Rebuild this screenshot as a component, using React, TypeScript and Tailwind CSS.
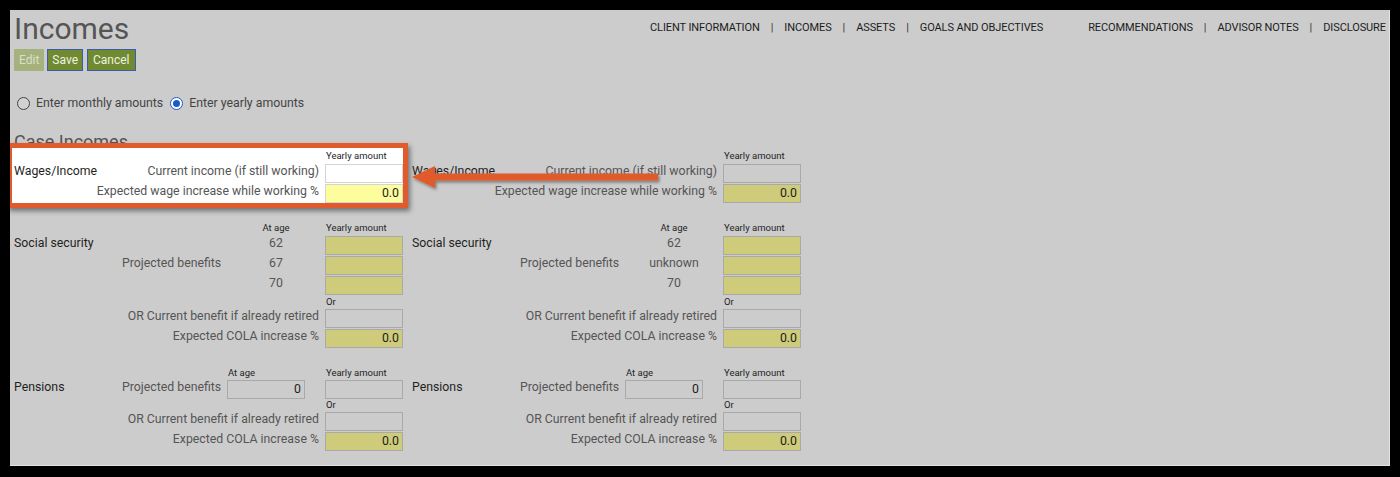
import React from "react";

type Tone = "gray" | "yellow" | "white" | "lightyellow";

const toneClass: Record<Tone, string> = {
  gray: "bg-[#cccccc] border-[#a9a9a9]",
  yellow: "bg-[#cecc7a] border-[#a9a9a9]",
  white: "bg-white border-[#d4d4d4]",
  lightyellow: "bg-[#fdfd9d] border-[#d4d4d4]",
};

function Box({ tone = "gray", value = "" }: { tone?: Tone; value?: string }) {
  return (
    <div
      className={
        "w-[78px] h-[19px] shrink-0 border-[1.5px] flex items-center justify-end pr-[3px] text-[12.3px] text-[#1e1e1e] " +
        toneClass[tone]
      }
    >
      {value}
    </div>
  );
}

const lbl = "text-[12.3px] text-[#555555] whitespace-nowrap pb-[4px]";
const sec = "text-[12.3px] text-[#1f1f1f] whitespace-nowrap pb-[4px]";
const small = "text-[9.5px] text-[#1f1f1f] whitespace-nowrap leading-none";

function Wages({ highlight }: { highlight?: boolean }) {
  return (
    <div className={highlight ? "relative -ml-[2px] pl-[2px] w-[391px] bg-white" : "relative w-[389px]"}>
      {highlight && (
        <div className="absolute -inset-[5px] border-[5px] border-[#e05a2c] shadow-[2px_3px_5px_rgba(0,0,0,0.45)] pointer-events-none" />
      )}
      <div className="h-[15px] flex items-center">
        <div className="w-[312px] shrink-0" />
        <div className={small}>Yearly amount</div>
      </div>
      <div className="flex h-[20px] items-center">
        <div className={"w-[108px] shrink-0 " + sec}>Wages/Income</div>
        <div className={"w-[197px] shrink-0 text-right " + lbl}>Current income (if still working)</div>
        <div className="w-[6px] shrink-0" />
        <Box tone={highlight ? "white" : "gray"} />
      </div>
      <div className="flex h-[20px] items-center">
        <div className={"w-[305px] shrink-0 text-right " + lbl}>Expected wage increase while working %</div>
        <div className="w-[6px] shrink-0" />
        <Box tone={highlight ? "lightyellow" : "yellow"} value="0.0" />
      </div>
    </div>
  );
}

function Social({ mid }: { mid: string }) {
  return (
    <div className="w-[389px]">
      <div className="h-[14px] flex items-center">
        <div className="w-[230px] shrink-0" />
        <div className={"w-[64px] shrink-0 text-center " + small}>At age</div>
        <div className="w-[18px] shrink-0" />
        <div className={small}>Yearly amount</div>
      </div>
      {[
        ["Social security", "", "62"],
        ["", "Projected benefits", mid],
        ["", "", "70"],
      ].map(([a, b, c], i) => (
        <div key={i} className="flex h-[20px] items-center">
          <div className={"w-[108px] shrink-0 " + sec}>{a}</div>
          <div className={"w-[122px] shrink-0 " + lbl}>{b}</div>
          <div className={"w-[64px] shrink-0 text-center " + lbl}>{c}</div>
          <div className="w-[17px] shrink-0" />
          <Box tone="yellow" />
        </div>
      ))}
      <div className="h-[13px] flex items-center">
        <div className="w-[312px] shrink-0" />
        <div className={small}>Or</div>
      </div>
      <div className="flex h-[20px] items-center">
        <div className={"w-[305px] shrink-0 text-right " + lbl}>OR Current benefit if already retired</div>
        <div className="w-[6px] shrink-0" />
        <Box tone="gray" />
      </div>
      <div className="flex h-[20px] items-center">
        <div className={"w-[305px] shrink-0 text-right " + lbl}>Expected COLA increase %</div>
        <div className="w-[6px] shrink-0" />
        <Box tone="yellow" value="0.0" />
      </div>
    </div>
  );
}

function Pensions() {
  return (
    <div className="w-[389px]">
      <div className="h-[12px] flex items-center">
        <div className="w-[214px] shrink-0" />
        <div className={"w-[98px] shrink-0 " + small}>At age</div>
        <div className={small}>Yearly amount</div>
      </div>
      <div className="flex h-[20px] items-center">
        <div className={"w-[108px] shrink-0 " + sec}>Pensions</div>
        <div className={"w-[105px] shrink-0 " + lbl}>Projected benefits</div>
        <Box tone="gray" value="0" />
        <div className="w-[20px] shrink-0" />
        <Box tone="gray" />
      </div>
      <div className="h-[12px] flex items-center">
        <div className="w-[312px] shrink-0" />
        <div className={small}>Or</div>
      </div>
      <div className="flex h-[20px] items-center">
        <div className={"w-[305px] shrink-0 text-right " + lbl}>OR Current benefit if already retired</div>
        <div className="w-[6px] shrink-0" />
        <Box tone="gray" />
      </div>
      <div className="flex h-[20px] items-center">
        <div className={"w-[305px] shrink-0 text-right " + lbl}>Expected COLA increase %</div>
        <div className="w-[6px] shrink-0" />
        <Box tone="yellow" value="0.0" />
      </div>
    </div>
  );
}

function Sep() {
  return <span className="mx-[11px] text-[#333]">|</span>;
}

export default function App() {
  return (
    <div className="w-[1400px] h-[477px] bg-black pt-[10px] pl-[10px] font-['Roboto','Liberation_Sans',sans-serif]">
      <div className="relative w-[1380px] h-[456px] bg-[#cccccc] border-r border-b border-[#e4e4e4] overflow-hidden pl-[4px]">
        <div className="flex">
          <div className="w-[636px] shrink-0">
            <div className="h-[38px] leading-[38px] text-[30px] text-[#555555]">Incomes</div>
            <div className="mt-[1px] flex gap-[3px] h-[22px]">
              <div className="h-[22px] px-[5px] flex items-center bg-[#a5b27e] text-[#d9e0c6] text-[12px] rounded-[1px]">Edit</div>
              <div className="h-[22px] px-[4px] flex items-center bg-[#6f8a31] text-[#eef2e2] text-[12px] border border-[#3a5cab]">Save</div>
              <div className="ml-[1px] h-[22px] px-[5px] flex items-center bg-[#6f8a31] text-[#eef2e2] text-[12px] border border-[#3a5cab]">Cancel</div>
            </div>
          </div>
          <div className="pt-[11px] flex items-start text-[11px] tracking-[-0.1px] text-[#1c1c1c] whitespace-nowrap leading-[14px]">
            <span>CLIENT INFORMATION</span>
            <Sep />
            <span>INCOMES</span>
            <Sep />
            <span>ASSETS</span>
            <Sep />
            <span>GOALS AND OBJECTIVES</span>
            <span className="ml-[45px]">RECOMMENDATIONS</span>
            <Sep />
            <span>ADVISOR NOTES</span>
            <Sep />
            <span>DISCLOSURE</span>
          </div>
        </div>

        <div className="mt-[22px] h-[20px] flex items-center text-[12.3px] text-[#444]">
          <div className="ml-[3px] w-[13px] h-[13px] rounded-full border border-[#444] bg-[#d2d2d2]" />
          <span className="ml-[6px]">Enter monthly amounts</span>
          <div className="ml-[7px] w-[13px] h-[13px] rounded-full border-[1.5px] border-[#1b5bc8] bg-white flex items-center justify-center">
            <div className="w-[7px] h-[7px] rounded-full bg-[#1b5bc8]" />
          </div>
          <span className="ml-[6px]">Enter yearly amounts</span>
        </div>

        <div className="mt-[18px] h-[17px] leading-[22px] text-[18px] text-[#555555]">Case Incomes</div>

        <div className="flex gap-[9px]">
          <Wages highlight />
          <Wages />
        </div>

        <div className="mt-[18px] flex gap-[9px]">
          <Social mid="67" />
          <Social mid="unknown" />
        </div>

        <div className="mt-[19px] flex gap-[9px]">
          <Pensions />
          <Pensions />
        </div>

        <svg className="absolute left-[400px] top-[152px]" width="252" height="36" viewBox="0 0 252 36">
          <defs>
            <filter id="sh" x="-10%" y="-50%" width="120%" height="200%">
              <feDropShadow dx="1.5" dy="2" stdDeviation="1.5" floodColor="#000" floodOpacity="0.4" />
            </filter>
          </defs>
          <g filter="url(#sh)">
            <rect x="22" y="11.5" width="226" height="7" fill="#e05a2c" />
            <polygon points="2,15 25,4 25,26" fill="#e05a2c" />
          </g>
        </svg>
      </div>
    </div>
  );
}
